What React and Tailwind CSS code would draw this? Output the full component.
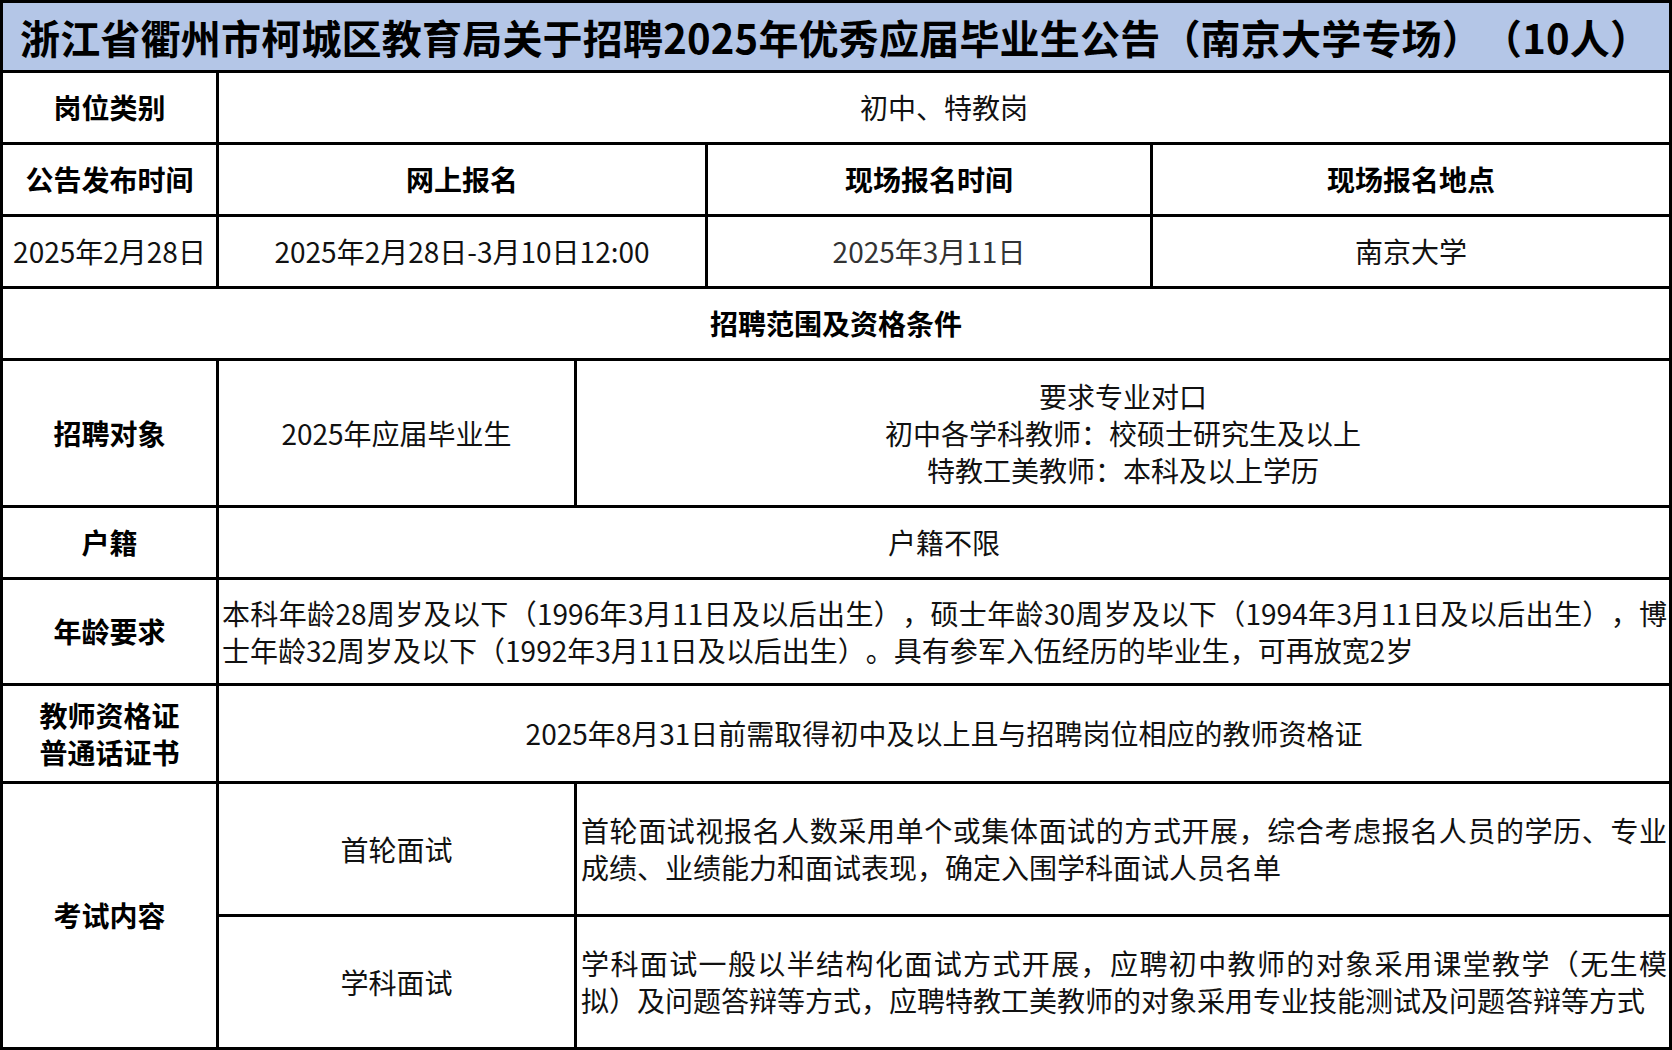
import React from 'react';

const font = { fontFamily: '"Noto Sans CJK SC", "Noto Sans", sans-serif' };

function Cell({ className = '', children }) {
  return (
    <div className={`bg-white flex items-center justify-center text-center text-[28px] leading-[37px] text-[#111] ${className}`}>
      {children}
    </div>
  );
}

function Label({ className = '', children }) {
  return <Cell className={`font-bold text-black ${className}`}>{children}</Cell>;
}

// two-line paragraph: first line stretched edge to edge like the spreadsheet, last line left
function Para({ first, last }) {
  return (
    <>
      <span className="self-stretch text-justify [text-align-last:justify]">{first}</span>
      <span>{last}</span>
    </>
  );
}

export default function App() {
  return (
    <div className="w-[1672px] h-[1050px] overflow-hidden [text-spacing-trim:space-all]" style={font}>
      <div className="grid grid-cols-[213px_355px_128px_442px_1fr] grid-rows-[67px_69px_69px_69px_69px_144px_69px_103px_95px_130px_130px] gap-[3px] p-[3px] bg-black h-full">
        <div className="col-span-5 bg-[#b4c6e7] flex items-center pl-[17px] text-[40px] font-bold text-black whitespace-nowrap tracking-[0.2px]">
          浙江省衢州市柯城区教育局关于招聘2025年优秀应届毕业生公告（南京大学专场）（10人）
        </div>

        <Label>岗位类别</Label>
        <Cell className="col-span-4">初中、特教岗</Cell>

        <Label>公告发布时间</Label>
        <Label className="col-span-2">网上报名</Label>
        <Label>现场报名时间</Label>
        <Label>现场报名地点</Label>

        <Cell>2025年2月28日</Cell>
        <Cell className="col-span-2">2025年2月28日-3月10日12:00</Cell>
        <Cell className="text-[#333]">2025年3月11日</Cell>
        <Cell>南京大学</Cell>

        <Label className="col-span-5">招聘范围及资格条件</Label>

        <Label>招聘对象</Label>
        <Cell>2025年应届毕业生</Cell>
        <Cell className="col-span-3 flex-col">
          <span>要求专业对口</span>
          <span>初中各学科教师：校硕士研究生及以上</span>
          <span>特教工美教师：本科及以上学历</span>
        </Cell>

        <Label>户籍</Label>
        <Cell className="col-span-4">户籍不限</Cell>

        <Label>年龄要求</Label>
        <Cell className="col-span-4 flex-col !items-start text-left pl-[3px] pr-[2px] whitespace-nowrap">
          <Para
            first="本科年龄28周岁及以下（1996年3月11日及以后出生），硕士年龄30周岁及以下（1994年3月11日及以后出生），博"
            last="士年龄32周岁及以下（1992年3月11日及以后出生）。具有参军入伍经历的毕业生，可再放宽2岁"
          />
        </Cell>

        <Label className="flex-col">
          <span>教师资格证</span>
          <span>普通话证书</span>
        </Label>
        <Cell className="col-span-4">2025年8月31日前需取得初中及以上且与招聘岗位相应的教师资格证</Cell>

        <Label className="row-span-2">考试内容</Label>
        <Cell>首轮面试</Cell>
        <Cell className="col-span-3 flex-col !items-start text-left pl-[4px] pr-[2px] whitespace-nowrap">
          <Para
            first="首轮面试视报名人数采用单个或集体面试的方式开展，综合考虑报名人员的学历、专业"
            last="成绩、业绩能力和面试表现，确定入围学科面试人员名单"
          />
        </Cell>

        <Cell>学科面试</Cell>
        <Cell className="col-span-3 flex-col !items-start text-left pl-[4px] pr-[2px] whitespace-nowrap">
          <Para
            first="学科面试一般以半结构化面试方式开展，应聘初中教师的对象采用课堂教学（无生模"
            last="拟）及问题答辩等方式，应聘特教工美教师的对象采用专业技能测试及问题答辩等方式"
          />
        </Cell>
      </div>
    </div>
  );
}
